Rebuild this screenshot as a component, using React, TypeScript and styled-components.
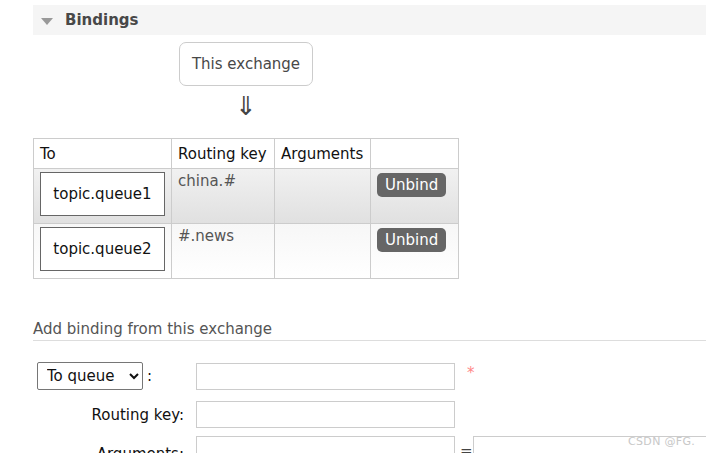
import React from 'react';
import styled, { createGlobalStyle } from 'styled-components';

const GlobalStyle = createGlobalStyle`
  html, body {
    margin: 0;
    padding: 0;
    background: #fff;
    font-family: "DejaVu Sans", Verdana, sans-serif;
    color: #484848;
    overflow: hidden;
  }
`;

const Page = styled.div`
  width: 706px;
  height: 453px;
  padding: 5px 0 0 33px;
  box-sizing: border-box;
  overflow: hidden;
  position: relative;
`;

const SectionHeader = styled.div`
  display: flex;
  align-items: center;
  height: 30px;
  background: #f5f5f5;
  padding-left: 8px;
  font-size: 15px;
  font-weight: bold;
  color: #484848;
  gap: 12px;
`;

const Triangle = styled.span`
  width: 0;
  height: 0;
  border-left: 6px solid transparent;
  border-right: 6px solid transparent;
  border-top: 7px solid #999;
  margin-top: 2px;
`;

const Flow = styled.div`
  display: flex;
  flex-direction: column;
  align-items: flex-start;
  padding-left: 146px;
  margin-top: 7px;
`;

const ExchangeBox = styled.div`
  width: 134px;
  height: 44px;
  box-sizing: border-box;
  border: 1px solid #ccc;
  border-radius: 7px;
  display: flex;
  align-items: center;
  justify-content: center;
  font-size: 15px;
  color: #484848;
`;

const Arrow = styled.div`
  width: 134px;
  text-align: center;
  font-size: 26px;
  line-height: 30px;
  height: 52px;
  color: #444;
  padding-top: 5px;
  box-sizing: border-box;
`;

const Table = styled.table`
  border-collapse: collapse;
  font-size: 15px;
`;

const Th = styled.th<{ $w: number }>`
  width: ${(p) => p.$w}px;
  box-sizing: border-box;
  height: 30px;
  padding: 0 6px;
  text-align: left;
  font-weight: normal;
  color: #111;
  border: 1px solid #ccc;
  background: #fff;
  vertical-align: middle;
  white-space: nowrap;
`;

const Tr = styled.tr<{ $alt?: boolean }>`
  height: 55px;
  background: ${(p) =>
    p.$alt
      ? 'linear-gradient(#f7f7f7, #fff)'
      : 'linear-gradient(#f1f1f1, #e0e0e0)'};
`;

const Td = styled.td`
  border: 1px solid #ccc;
  padding: 3px 6px;
  vertical-align: top;
  color: #555;
`;

const QueueBox = styled.div`
  width: 125px;
  height: 44px;
  box-sizing: border-box;
  border: 1px solid #666;
  background: #fff;
  color: #111;
  display: flex;
  align-items: center;
  justify-content: center;
`;

const UnbindButton = styled.button`
  font-family: inherit;
  font-size: 15px;
  color: #fff;
  background: #666;
  border: none;
  border-radius: 5px;
  padding: 0 8px;
  height: 24px;
  margin-top: 1px;
`;

const FormTitle = styled.div`
  margin-top: 41px;
  font-size: 15px;
  color: #555;
  padding-bottom: 2px;
  border-bottom: 1px solid #ddd;
`;

const Form = styled.div`
  display: flex;
  flex-direction: column;
  margin-top: 21px;
`;

const FormRow = styled.div<{ $gap: number }>`
  display: flex;
  align-items: center;
  margin-top: ${(p) => p.$gap}px;
`;

const Label = styled.label<{ $drop?: number }>`
  width: 163px;
  box-sizing: border-box;
  font-size: 15px;
  color: #111;
  text-align: right;
  padding-right: 12px;
  padding-top: ${(p) => p.$drop ?? 0}px;
  flex: none;
`;

const SelectLabel = styled.div`
  width: 163px;
  flex: none;
  display: flex;
  align-items: center;
  gap: 4px;
  font-size: 15px;
  color: #111;
  padding-left: 4px;
  box-sizing: border-box;
`;

const Select = styled.select`
  width: 106px;
  height: 28px;
  font-family: inherit;
  font-size: 15px;
  color: #111;
  border: 1px solid #767676;
  border-radius: 2px;
  background: #fff;
  padding-left: 5px;
`;

const Input = styled.input<{ $w?: number }>`
  width: ${(p) => p.$w ?? 259}px;
  height: 27px;
  box-sizing: border-box;
  border: 1px solid #ccc;
  margin: 0;
  flex: none;
`;

const Required = styled.span`
  color: #f88;
  font-size: 15px;
  align-self: flex-start;
  margin: 2px 0 0 12px;
`;

const Equals = styled.span`
  font-size: 15px;
  color: #444;
  width: 19px;
  padding-left: 5px;
  box-sizing: border-box;
  align-self: flex-end;
  line-height: 14px;
  margin-bottom: 5px;
`;

const Watermark = styled.div`
  position: absolute;
  right: 11px;
  bottom: 5px;
  font-family: "DejaVu Sans", sans-serif;
  font-size: 11px;
  color: #c8c8c8;
  letter-spacing: 0.3px;
`;

const rows = [
  { queue: 'topic.queue1', key: 'china.#' },
  { queue: 'topic.queue2', key: '#.news' },
];

export default function App() {
  return (
    <>
      <GlobalStyle />
      <Page>
        <SectionHeader>
          <Triangle />
          Bindings
        </SectionHeader>
        <Flow>
          <ExchangeBox>This exchange</ExchangeBox>
          <Arrow>⇓</Arrow>
        </Flow>
        <Table>
          <thead>
            <tr>
              <Th $w={138}>To</Th>
              <Th $w={103}>Routing key</Th>
              <Th $w={96}>Arguments</Th>
              <Th $w={88}></Th>
            </tr>
          </thead>
          <tbody>
            {rows.map((r, i) => (
              <Tr key={r.queue} $alt={i % 2 === 1}>
                <Td>
                  <QueueBox>{r.queue}</QueueBox>
                </Td>
                <Td>{r.key}</Td>
                <Td></Td>
                <Td>
                  <UnbindButton>Unbind</UnbindButton>
                </Td>
              </Tr>
            ))}
          </tbody>
        </Table>
        <FormTitle>Add binding from this exchange</FormTitle>
        <Form>
          <FormRow $gap={0}>
            <SelectLabel>
              <Select defaultValue="queue">
                <option value="queue">To queue</option>
                <option value="exchange">To exchange</option>
              </Select>
              :
            </SelectLabel>
            <Input />
            <Required>*</Required>
          </FormRow>
          <FormRow $gap={11}>
            <Label>Routing key:</Label>
            <Input />
          </FormRow>
          <FormRow $gap={7}>
            <Label $drop={10}>Arguments:</Label>
            <Input />
            <Equals>=</Equals>
            <Input $w={240} />
          </FormRow>
        </Form>
        <Watermark>CSDN @FG.</Watermark>
      </Page>
    </>
  );
}
